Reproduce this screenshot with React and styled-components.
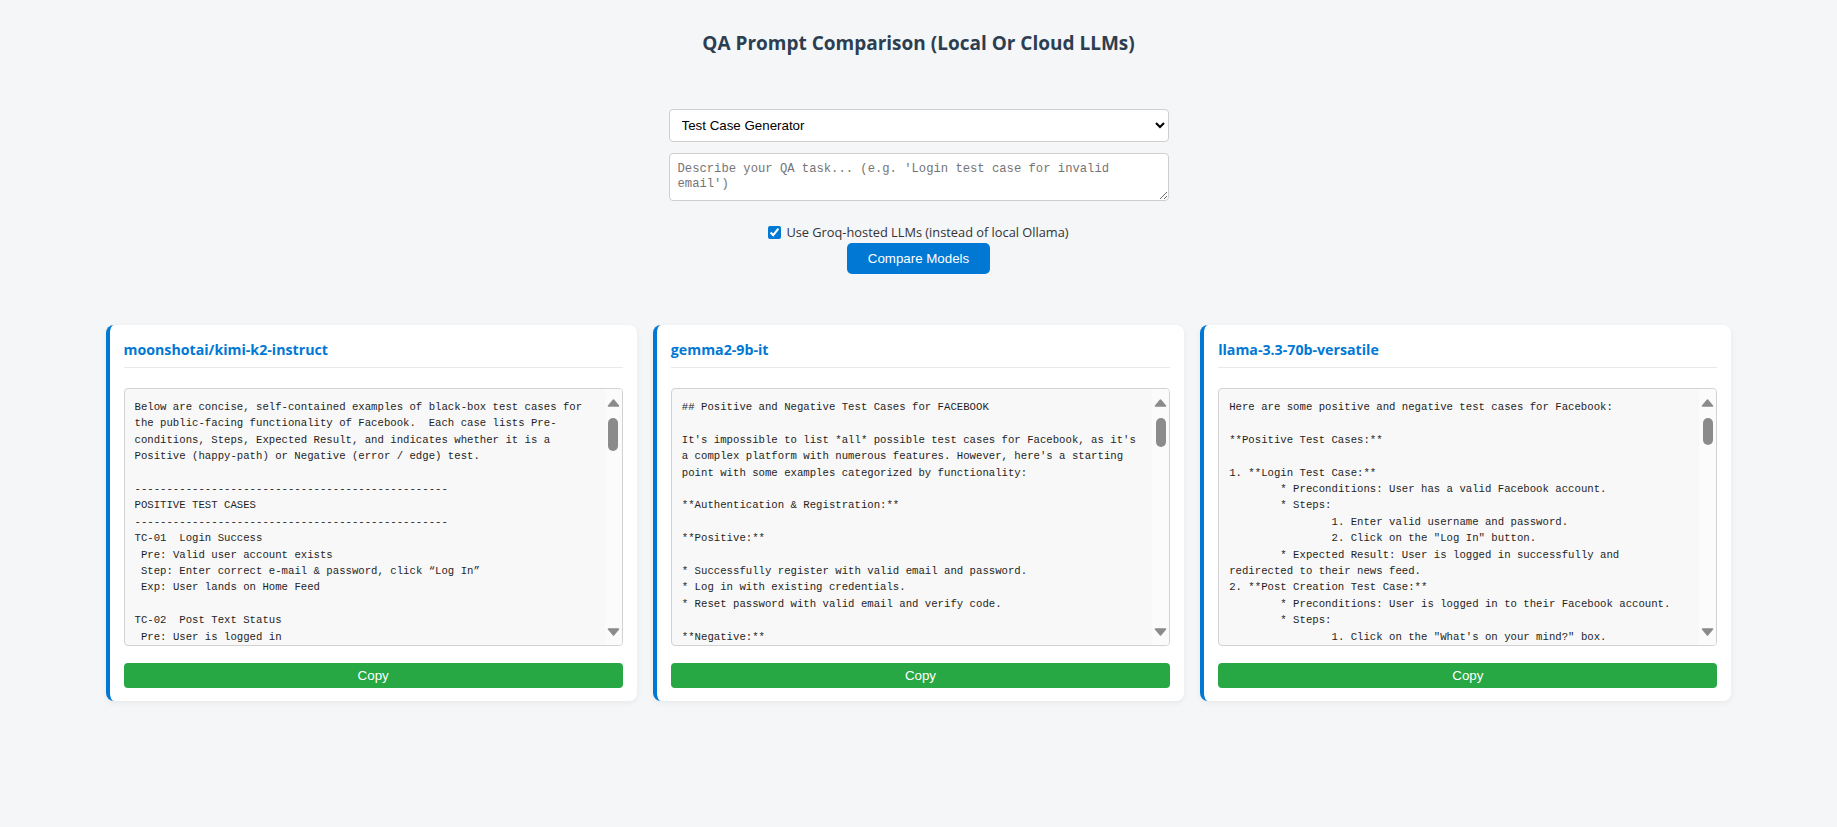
import React from "react";
import styled, { createGlobalStyle } from "styled-components";

const GlobalStyle = createGlobalStyle`
  html, body { margin: 0; padding: 0; }
  body {
    background: #f4f6f8;
    font-family: "Segoe UI", "Open Sans", Arial, sans-serif;
    color: #333;
  }
  * { box-sizing: border-box; }
`;

const Page = styled.div`
  min-height: 100vh;
  padding: 31px 0 60px;
`;

const Title = styled.h1`
  margin: 0;
  text-align: center;
  font-size: 19px;
  line-height: 24px;
  font-weight: 700;
  color: #2c3e50;
`;

const Form = styled.div`
  width: 500px;
  margin: 54px auto 0;
  display: flex;
  flex-direction: column;
  align-items: stretch;
`;

const Select = styled.select`
  height: 33px;
  padding: 0 8px;
  border: 1px solid #cfcfcf;
  border-radius: 4px;
  background: #fff;
  font-family: "Liberation Sans", Arial, sans-serif;
  font-size: 13.33px;
  color: #000;
`;

const Prompt = styled.textarea`
  margin-top: 11px;
  height: 48px;
  padding: 8px;
  border: 1px solid #cfcfcf;
  border-radius: 4px;
  background: #fff;
  font-family: "Liberation Mono", monospace;
  font-size: 12.2px;
  line-height: 15px;
  color: #000;
  &::placeholder { color: #757575; }
`;

const OptionRow = styled.label`
  margin-top: 21px;
  height: 20px;
  display: flex;
  align-items: center;
  justify-content: center;
  font-size: 12.8px;
  color: #333;
  input {
    margin: 0 5px 0 0;
    width: 13px;
    height: 13px;
    accent-color: #0078d4;
  }
`;

const CompareButton = styled.button`
  align-self: center;
  margin-top: 1px;
  height: 31px;
  padding: 0 21px;
  border: none;
  border-radius: 5px;
  background: #0078d4;
  color: #fff;
  font-family: "Liberation Sans", Arial, sans-serif;
  font-size: 13.33px;
  cursor: pointer;
`;

const Grid = styled.div`
  width: 1626px;
  margin: 51px auto 0;
  display: grid;
  grid-template-columns: repeat(3, 1fr);
  gap: 16px;
`;

const Card = styled.section`
  background: #fff;
  border-radius: 8px;
  border-left: 4px solid #0078d4;
  padding: 14px 14px 13px 14px;
  box-shadow: 0 2px 6px rgba(0, 0, 0, 0.06);
  min-width: 0;
`;

const ModelName = styled.h3`
  margin: 0;
  padding-bottom: 6px;
  border-bottom: 1px solid #e9e9e9;
  font-size: 14.2px;
  line-height: 22px;
  font-weight: 700;
  color: #0078d4;
`;

const OutputFrame = styled.div`
  margin-top: 20px;
  height: 258px;
  display: flex;
  border: 1px solid #d2d2d2;
  border-radius: 4px;
  background: #f8f8f8;
  overflow: hidden;
`;

const TextPane = styled.div`
  flex: 1;
  min-width: 0;
  padding: 10px 14px 10px 10px;
  font-family: "Liberation Mono", monospace;
  font-size: 10.667px;
  line-height: 16.4px;
  color: #1f1f1f;
  white-space: pre-wrap;
  tab-size: 8;
  overflow: hidden;
`;

const ScrollRail = styled.div`
  flex: none;
  width: 17px;
  display: flex;
  flex-direction: column;
  align-items: center;
  background: #fbfbfb;
`;

const RailSpacer = styled.div`
  flex: 1;
`;

const Thumb = styled.div`
  margin-top: 3px;
  width: 10px;
  height: ${(p) => p.$length}px;
  border-radius: 5px;
  background: #8b8b8b;
`;

const ArrowSvg = styled.svg`
  display: block;
  flex: none;
`;

function RailArrow({ dir }) {
  const pts = dir === "up" ? "3.5,17 8.5,11 13.5,17" : "3.5,10 8.5,16 13.5,10";
  return (
    <ArrowSvg width="17" height="26" viewBox="0 0 17 26" aria-hidden="true">
      <polygon points={pts} fill="#8b8b8b" stroke="#8b8b8b" strokeWidth="1.6" strokeLinejoin="round" />
    </ArrowSvg>
  );
}

const CopyButton = styled.button`
  display: block;
  width: 100%;
  margin-top: 17px;
  height: 25px;
  border: none;
  border-radius: 4px;
  background: #28a745;
  color: #fff;
  font-family: "Liberation Sans", Arial, sans-serif;
  font-size: 13.33px;
  cursor: pointer;
`;

const dash = "-".repeat(49);

const kimi = [
  "Below are concise, self-contained examples of black-box test cases for the public-facing functionality of Facebook.  Each case lists Pre-conditions, Steps, Expected Result, and indicates whether it is a Positive (happy-path) or Negative (error / edge) test.",
  "",
  dash,
  "POSITIVE TEST CASES",
  dash,
  "TC-01  Login Success",
  " Pre: Valid user account exists",
  " Step: Enter correct e-mail & password, click \u201cLog In\u201d",
  " Exp: User lands on Home Feed",
  "",
  "TC-02  Post Text Status",
  " Pre: User is logged in",
].join("\n");

const gemma = [
  "## Positive and Negative Test Cases for FACEBOOK",
  "",
  "It's impossible to list *all* possible test cases for Facebook, as it's a complex platform with numerous features. However, here's a starting point with some examples categorized by functionality:",
  "",
  "**Authentication & Registration:**",
  "",
  "**Positive:**",
  "",
  "* Successfully register with valid email and password.",
  "* Log in with existing credentials.",
  "* Reset password with valid email and verify code.",
  "",
  "**Negative:**",
].join("\n");

const llama = [
  "Here are some positive and negative test cases for Facebook:",
  "",
  "**Positive Test Cases:**",
  "",
  "1. **Login Test Case:**",
  "\t* Preconditions: User has a valid Facebook account.",
  "\t* Steps:",
  "\t\t1. Enter valid username and password.",
  "\t\t2. Click on the \"Log In\" button.",
  "\t* Expected Result: User is logged in successfully and redirected to their news feed.",
  "2. **Post Creation Test Case:**",
  "\t* Preconditions: User is logged in to their Facebook account.",
  "\t* Steps:",
  "\t\t1. Click on the \"What's on your mind?\" box.",
].join("\n");

const results = [
  { model: "moonshotai/kimi-k2-instruct", text: kimi, thumb: 33 },
  { model: "gemma2-9b-it", text: gemma, thumb: 29 },
  { model: "llama-3.3-70b-versatile", text: llama, thumb: 27 },
];

export default function App() {
  return (
    <>
      <GlobalStyle />
      <Page>
        <Title>QA Prompt Comparison (Local Or Cloud LLMs)</Title>
        <Form>
          <Select defaultValue="tc">
            <option value="tc">Test Case Generator</option>
            <option value="bug">Bug Report Writer</option>
          </Select>
          <Prompt placeholder="Describe your QA task... (e.g. 'Login test case for invalid email')" />
          <OptionRow>
            <input type="checkbox" defaultChecked />
            Use Groq-hosted LLMs (instead of local Ollama)
          </OptionRow>
          <CompareButton>Compare Models</CompareButton>
        </Form>
        <Grid>
          {results.map((r) => (
            <Card key={r.model}>
              <ModelName>{r.model}</ModelName>
              <OutputFrame>
                <TextPane>{r.text}</TextPane>
                <ScrollRail>
                  <RailArrow dir="up" />
                  <Thumb $length={r.thumb} />
                  <RailSpacer />
                  <RailArrow dir="down" />
                </ScrollRail>
              </OutputFrame>
              <CopyButton>Copy</CopyButton>
            </Card>
          ))}
        </Grid>
      </Page>
    </>
  );
}
